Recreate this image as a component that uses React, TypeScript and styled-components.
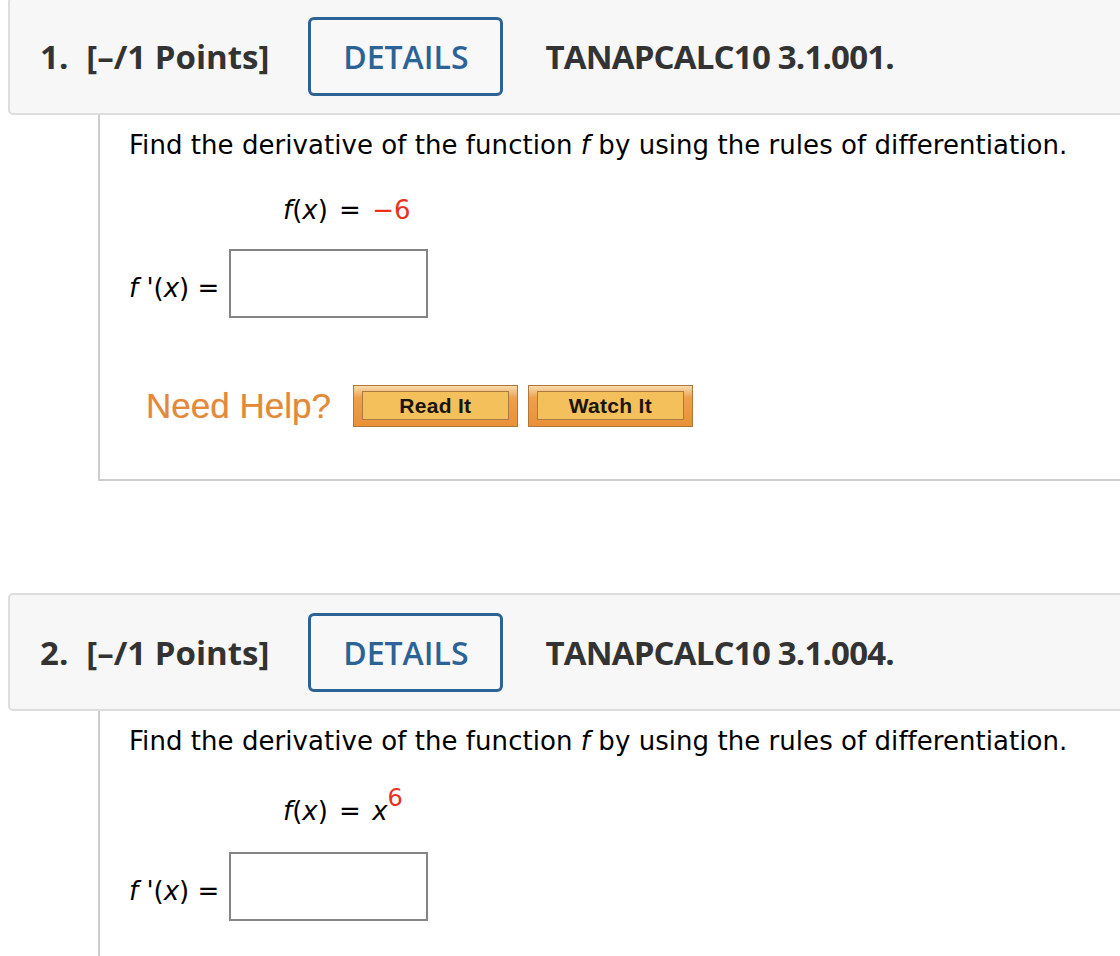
import styled, { createGlobalStyle } from 'styled-components';

const GlobalStyle = createGlobalStyle`
  html, body {
    margin: 0;
    padding: 0;
    background: #ffffff;
    overflow: hidden;
  }
`;

interface Question {
  number: number;
  code: string;
  kind: 'constant' | 'power';
  gap: number;
  showHelp?: boolean;
}

const questions: Question[] = [
  { number: 1, code: 'TANAPCALC10 3.1.001.', kind: 'constant', gap: 35, showHelp: true },
  { number: 2, code: 'TANAPCALC10 3.1.004.', kind: 'power', gap: 40 },
];

const FormulaBody = ({ kind }: { kind: Question['kind'] }) =>
  kind === 'constant' ? (
    <>
      <Var>f</Var>(<Var>x</Var>) = <Red>−6</Red>
    </>
  ) : (
    <>
      <Var>f</Var>(<Var>x</Var>) = <Var>x</Var>
      <Sup>6</Sup>
    </>
  );

export default function App() {
  return (
    <>
      <GlobalStyle />
      <Page>
        {questions.map((q) => (
          <QuestionBlock key={q.number}>
            <Header>
              <Number>{q.number}.</Number>
              <Points>[–/1 Points]</Points>
              <DetailsButton>DETAILS</DetailsButton>
              <Code>{q.code}</Code>
            </Header>
            <Content $last={!q.showHelp}>
              <Prompt>
                Find the derivative of the function <Var>f</Var> by using the rules of differentiation.
              </Prompt>
              <Formula $gap={q.gap}>
                <FormulaBody kind={q.kind} />
              </Formula>
              <AnswerRow $gap={q.showHelp ? 24 : 26}>
                <AnswerLabel>
                  <Var>f</Var> '(<Var>x</Var>) =
                </AnswerLabel>
                <AnswerInput type="text" />
              </AnswerRow>
              {q.showHelp && (
                <HelpRow>
                  <HelpLabel>Need Help?</HelpLabel>
                  <HelpButton>
                    <HelpButtonFace>Read It</HelpButtonFace>
                  </HelpButton>
                  <HelpButton>
                    <HelpButtonFace>Watch It</HelpButtonFace>
                  </HelpButton>
                </HelpRow>
              )}
            </Content>
          </QuestionBlock>
        ))}
      </Page>
    </>
  );
}

const Page = styled.div`
  width: 1200px;
  margin-top: -3px;
  padding-left: 8px;
  display: flex;
  flex-direction: column;
  gap: 112px;
`;

const QuestionBlock = styled.section`
  display: flex;
  flex-direction: column;
`;

const Header = styled.div`
  display: flex;
  align-items: center;
  height: 118px;
  box-sizing: border-box;
  padding-left: 30px;
  background: #f7f7f7;
  border: 2px solid #dddddd;
  border-radius: 5px;
  font-family: 'Open Sans', sans-serif;
  font-weight: 700;
  font-size: 33px;
  color: #333333;
`;

const Number = styled.span`
  margin-right: 18px;
`;

const Points = styled.span`
  margin-right: 39px;
`;

const DetailsButton = styled.button`
  width: 195px;
  height: 79px;
  box-sizing: border-box;
  border: 3px solid #2b6396;
  border-radius: 6px;
  background: #f8f8f8;
  color: #2b6396;
  font-family: 'Open Sans', sans-serif;
  font-weight: 600;
  font-size: 32px;
  padding: 0;
  margin-right: 42px;
`;

const Code = styled.span`
  letter-spacing: -0.8px;
`;

const Content = styled.div<{ $last: boolean }>`
  margin-left: 90px;
  border-left: 2px solid #cccccc;
  border-bottom: ${(p) => (p.$last ? 'none' : '2px solid #cccccc')};
  padding: 15px 0 ${(p) => (p.$last ? '60px' : '52px')} 29px;
  font-family: 'DejaVu Sans', Verdana, sans-serif;
  font-size: 26px;
  color: #000000;
`;

const Prompt = styled.p`
  margin: 0;
  line-height: 30px;
  letter-spacing: 0.05px;
`;

const Var = styled.i`
  font-style: italic;
`;

const Red = styled.span`
  color: #e8321e;
`;

const Sup = styled.sup`
  color: #e8321e;
  font-size: 24px;
  vertical-align: 14px;
  line-height: 0;
`;

const Formula = styled.div<{ $gap: number }>`
  margin: ${(p) => p.$gap}px 0 0 154px;
  line-height: 30px;
  word-spacing: 3px;
`;

const AnswerRow = styled.div<{ $gap: number }>`
  display: flex;
  align-items: center;
  margin-top: ${(p) => p.$gap}px;
`;

const AnswerLabel = styled.span`
  width: 100px;
  padding-top: 8px;
`;

const AnswerInput = styled.input`
  width: 199px;
  height: 69px;
  box-sizing: border-box;
  border: 2px solid #858585;
  background: #ffffff;
  margin: 0;
`;

const HelpRow = styled.div`
  display: flex;
  align-items: center;
  gap: 10px;
  margin-top: 67px;
  padding-left: 17px;
`;

const HelpLabel = styled.span`
  font-family: 'Liberation Sans', Arial, sans-serif;
  font-size: 35px;
  color: #e2893a;
  margin-right: 12px;
  text-shadow: 0 0 1px rgba(226, 137, 58, 0.5);
`;

const HelpButton = styled.button`
  width: 165px;
  height: 42px;
  box-sizing: border-box;
  padding: 5px 8px 6px;
  border: 1px solid #b0763a;
  background: linear-gradient(#f8dcae 0%, #eea04b 30%, #e99138 100%);
  display: flex;
  align-items: stretch;
`;

const HelpButtonFace = styled.span`
  flex: 1;
  display: flex;
  align-items: center;
  justify-content: center;
  border: 1px solid #a97b44;
  background: #f3c05b;
  font-family: 'Liberation Sans', Arial, sans-serif;
  font-weight: 700;
  font-size: 21px;
  letter-spacing: 0.3px;
  color: #1a150c;
`;
